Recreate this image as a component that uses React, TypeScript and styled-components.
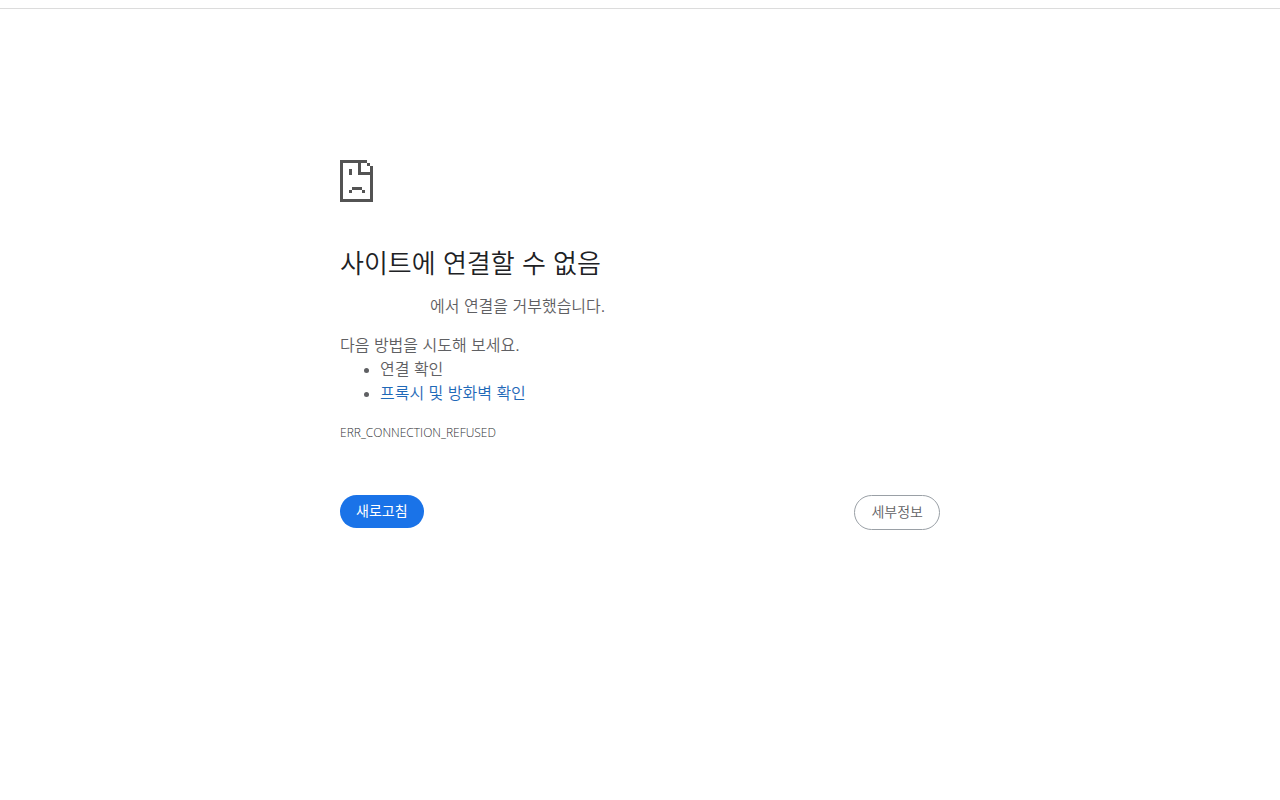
import React from "react";
import styled, { createGlobalStyle } from "styled-components";

const GlobalStyle = createGlobalStyle`
  body {
    margin: 0;
    background: #fff;
    color: #5f6063;
    font-family: "Liberation Sans", "Noto Sans CJK KR", sans-serif;
    font-size: 16px;
    font-weight: 350;
    line-height: 24px;
  }
`;

const TopRule = styled.div`
  height: 8px;
  border-bottom: 1px solid #dcdcdc;
`;

const Main = styled.main`
  box-sizing: border-box;
  max-width: 600px;
  margin: 0 auto;
  padding-top: 151px;
`;

const Icon = styled.svg`
  display: block;
  width: 33px;
  height: 42px;
  fill: #535353;
`;

const Title = styled.h1`
  margin: 46px 0 15px;
  color: #202124;
  font-size: 26px;
  font-weight: 350;
  line-height: 32px;
`;

const Summary = styled.p`
  margin: 0 0 15px;
`;

const Host = styled.span`
  display: inline-block;
  width: 90px;
`;

const Advice = styled.p`
  margin: 0;
`;

const Suggestions = styled.ul`
  margin: 0;
  padding-left: 40px;
`;

const HelpLink = styled.a`
  color: #1f69b8;
  text-decoration: none;
`;

const ErrorCode = styled.div`
  margin-top: 15px;
  color: #303134;
  font-family: "Open Sans", sans-serif;
  font-size: 12px;
  font-weight: 300;
`;

const Actions = styled.div`
  display: flex;
  justify-content: space-between;
  align-items: flex-start;
  margin-top: 50px;
`;

const Button = styled.button<{ $primary?: boolean }>`
  padding: 8px 16px;
  border: ${(p) => (p.$primary ? "0" : "1px solid #9aa0a6")};
  border-radius: 20px;
  background: ${(p) => (p.$primary ? "#1a73e8" : "#fff")};
  color: ${(p) => (p.$primary ? "#fff" : "#5f6063")};
  font-family: inherit;
  font-size: 14px;
  font-weight: ${(p) => (p.$primary ? 400 : 350)};
  line-height: 17px;
  cursor: pointer;
`;

export default function App() {
  return (
    <>
      <GlobalStyle />
      <TopRule />
      <Main>
        <Icon viewBox="0 0 33 42" shapeRendering="crispEdges" aria-hidden="true">
          <path
            d="M0 0H27V3H21V12H30V6H33V42H0ZM3 3V39H30V15H18V3Z"
            fillRule="evenodd"
          />
          <path d="M27 3H30V6H27ZM9 9H12V15H9ZM12 27H22V30H12ZM9 30H12V33H9ZM22 30H25V33H22Z" />
        </Icon>
        <Title>사이트에 연결할 수 없음</Title>
        <Summary>
          <Host />
          에서 연결을 거부했습니다.
        </Summary>
        <Advice>다음 방법을 시도해 보세요.</Advice>
        <Suggestions>
          <li>연결 확인</li>
          <li>
            <HelpLink href="#proxy">프록시 및 방화벽 확인</HelpLink>
          </li>
        </Suggestions>
        <ErrorCode>ERR_CONNECTION_REFUSED</ErrorCode>
        <Actions>
          <Button type="button" $primary>
            새로고침
          </Button>
          <Button type="button">세부정보</Button>
        </Actions>
      </Main>
    </>
  );
}
